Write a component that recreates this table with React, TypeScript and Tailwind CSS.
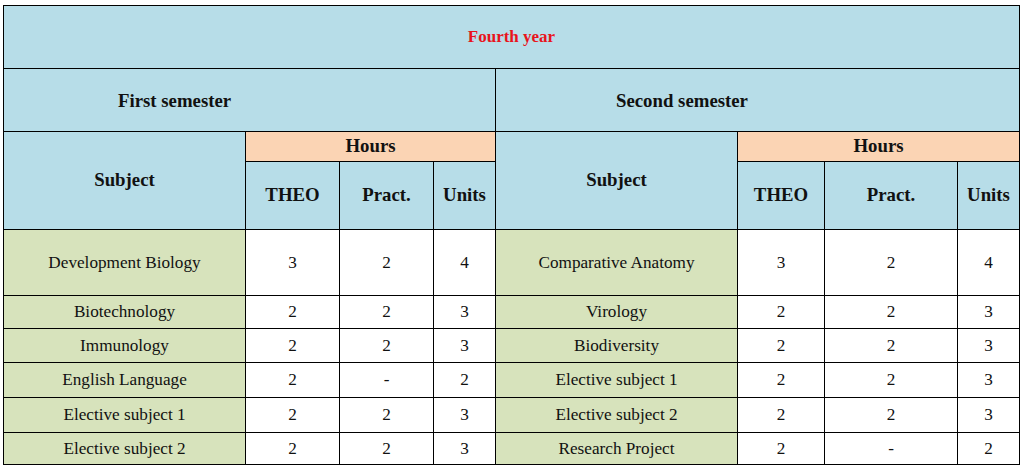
const headBlue = 'bg-[#b7dde8]';

const firstSemester = [
  { subject: 'Development Biology', theo: '3', pract: '2', units: '4' },
  { subject: 'Biotechnology', theo: '2', pract: '2', units: '3' },
  { subject: 'Immunology', theo: '2', pract: '2', units: '3' },
  { subject: 'English Language', theo: '2', pract: '-', units: '2' },
  { subject: 'Elective subject 1', theo: '2', pract: '2', units: '3' },
  { subject: 'Elective subject 2', theo: '2', pract: '2', units: '3' },
];

const secondSemester = [
  { subject: 'Comparative Anatomy', theo: '3', pract: '2', units: '4' },
  { subject: 'Virology', theo: '2', pract: '2', units: '3' },
  { subject: 'Biodiversity', theo: '2', pract: '2', units: '3' },
  { subject: 'Elective subject 1', theo: '2', pract: '2', units: '3' },
  { subject: 'Elective subject 2', theo: '2', pract: '2', units: '3' },
  { subject: 'Research Project', theo: '2', pract: '-', units: '2' },
];

function Cell({ className = '', children }: { className?: string; children?: React.ReactNode }) {
  return <div className={`flex items-center justify-center ${className}`}>{children}</div>;
}

export default function App() {
  return (
    <div className="w-[1021px] h-[469px] bg-white pt-[5px] pl-[3px] font-['Liberation_Serif','Times_New_Roman',serif] text-[#111]">
      <div className="grid w-[1017px] grid-cols-[241px_93px_93px_61px_241px_86px_132px_61px] grid-rows-[62px_62px_29px_67px_65px_32px_33px_34px_34px_31px] gap-px border border-black bg-black">
        <Cell className={`col-span-8 ${headBlue} text-[17px] font-bold text-[#e8141c]`}>Fourth year</Cell>

        <Cell className={`col-span-4 ${headBlue} justify-start pl-[114px] pt-[2px] text-[18.8px] font-bold`}>First semester</Cell>
        <Cell className={`col-span-4 ${headBlue} justify-start pl-[120px] pt-[2px] text-[18.8px] font-bold`}>Second semester</Cell>

        <Cell className={`row-span-2 ${headBlue} text-[18.8px] font-bold`}>Subject</Cell>
        <Cell className="col-span-3 bg-[#fbd4b4] text-[18.8px] font-bold">Hours</Cell>
        <Cell className={`row-span-2 ${headBlue} text-[18.8px] font-bold`}>Subject</Cell>
        <Cell className="col-span-3 bg-[#fbd4b4] text-[18.8px] font-bold">Hours</Cell>

        {['THEO', 'Pract.', 'Units', 'THEO', 'Pract.', 'Units'].map((h, i) => (
          <Cell key={i} className={`${headBlue} text-[18.8px] font-bold`}>
            {h}
          </Cell>
        ))}

        {firstSemester.map((row, i) => {
          const other = secondSemester[i];
          return [row, other].map((r, j) => (
            <div key={`${i}-${j}`} className="contents">
              <Cell className="bg-[#d7e3bc] text-[17.2px]">{r.subject}</Cell>
              <Cell className="bg-white text-[17.2px]">{r.theo}</Cell>
              <Cell className="bg-white text-[17.2px]">{r.pract}</Cell>
              <Cell className="bg-white text-[17.2px]">{r.units}</Cell>
            </div>
          ));
        })}
      </div>
    </div>
  );
}
